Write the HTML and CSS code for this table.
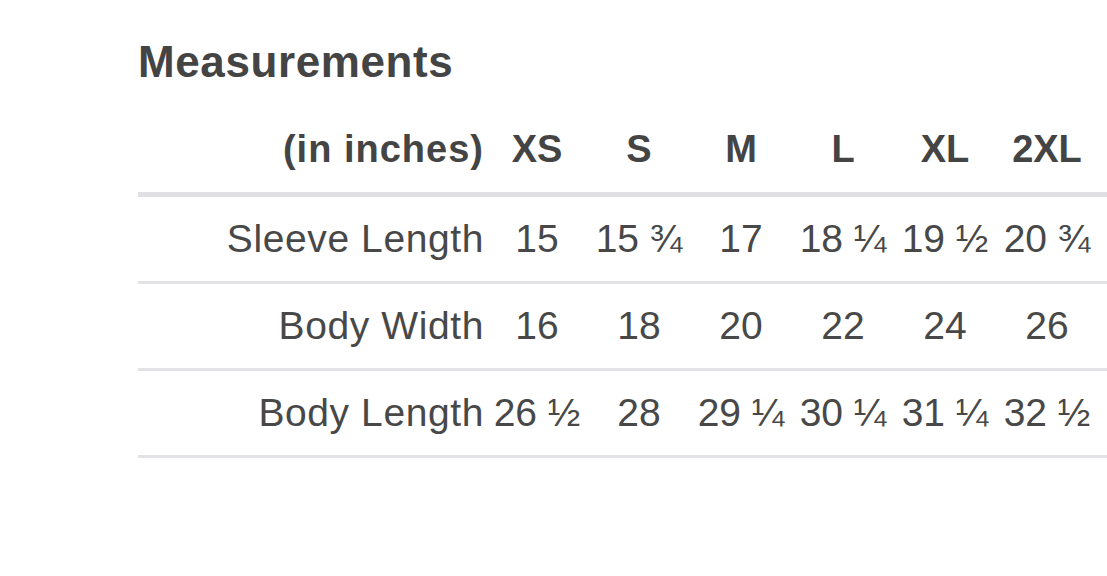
FILE: index.html
```html
<!DOCTYPE html>
<html lang="en">
<head>
<meta charset="utf-8">
<title>Measurements</title>
<link rel="stylesheet" href="styles.css">
</head>
<body>
<main class="page">
  <h1 class="title">Measurements</h1>
  <div class="chart">
    <div class="row head">
      <div class="label">(in inches)</div>
      <div class="cell">XS</div>
      <div class="cell">S</div>
      <div class="cell">M</div>
      <div class="cell">L</div>
      <div class="cell">XL</div>
      <div class="cell">2XL</div>
    </div>
    <div class="row">
      <div class="label">Sleeve Length</div>
      <div class="cell">15</div>
      <div class="cell">15 ¾</div>
      <div class="cell">17</div>
      <div class="cell">18 ¼</div>
      <div class="cell">19 ½</div>
      <div class="cell">20 ¾</div>
    </div>
    <div class="row">
      <div class="label">Body Width</div>
      <div class="cell">16</div>
      <div class="cell">18</div>
      <div class="cell">20</div>
      <div class="cell">22</div>
      <div class="cell">24</div>
      <div class="cell">26</div>
    </div>
    <div class="row">
      <div class="label">Body Length</div>
      <div class="cell">26 ½</div>
      <div class="cell">28</div>
      <div class="cell">29 ¼</div>
      <div class="cell">30 ¼</div>
      <div class="cell">31 ¼</div>
      <div class="cell">32 ½</div>
    </div>
  </div>
</main>
</body>
</html>
```

FILE: styles.css
```css
html, body {
  margin: 0;
  padding: 0;
  background: #ffffff;
}

body {
  font-family: "Liberation Sans", Arial, Helvetica, sans-serif;
  color: #484848;
  overflow: hidden;
}

.page {
  padding: 37px 0 0 138px;
}

.title {
  margin: 0;
  font-size: 44px;
  line-height: 50px;
  font-weight: bold;
  letter-spacing: 0.6px;
  color: #444444;
}

.chart {
  margin-top: 19px;
}

.row {
  display: grid;
  grid-template-columns: 348px repeat(6, 102px) 1fr;
  align-items: center;
  height: 84px;
  border-bottom: 3px solid #e3e3e7;
  font-size: 39px;
  white-space: nowrap;
}

.row.head {
  height: 86px;
  border-bottom: 5px solid #dfdfe4;
  font-size: 38px;
  font-weight: bold;
  color: #444444;
}

.label {
  text-align: right;
  padding-right: 2px;
  letter-spacing: 0.6px;
}

.row.head .label {
  letter-spacing: 1px;
}

.cell {
  text-align: center;
}
```
